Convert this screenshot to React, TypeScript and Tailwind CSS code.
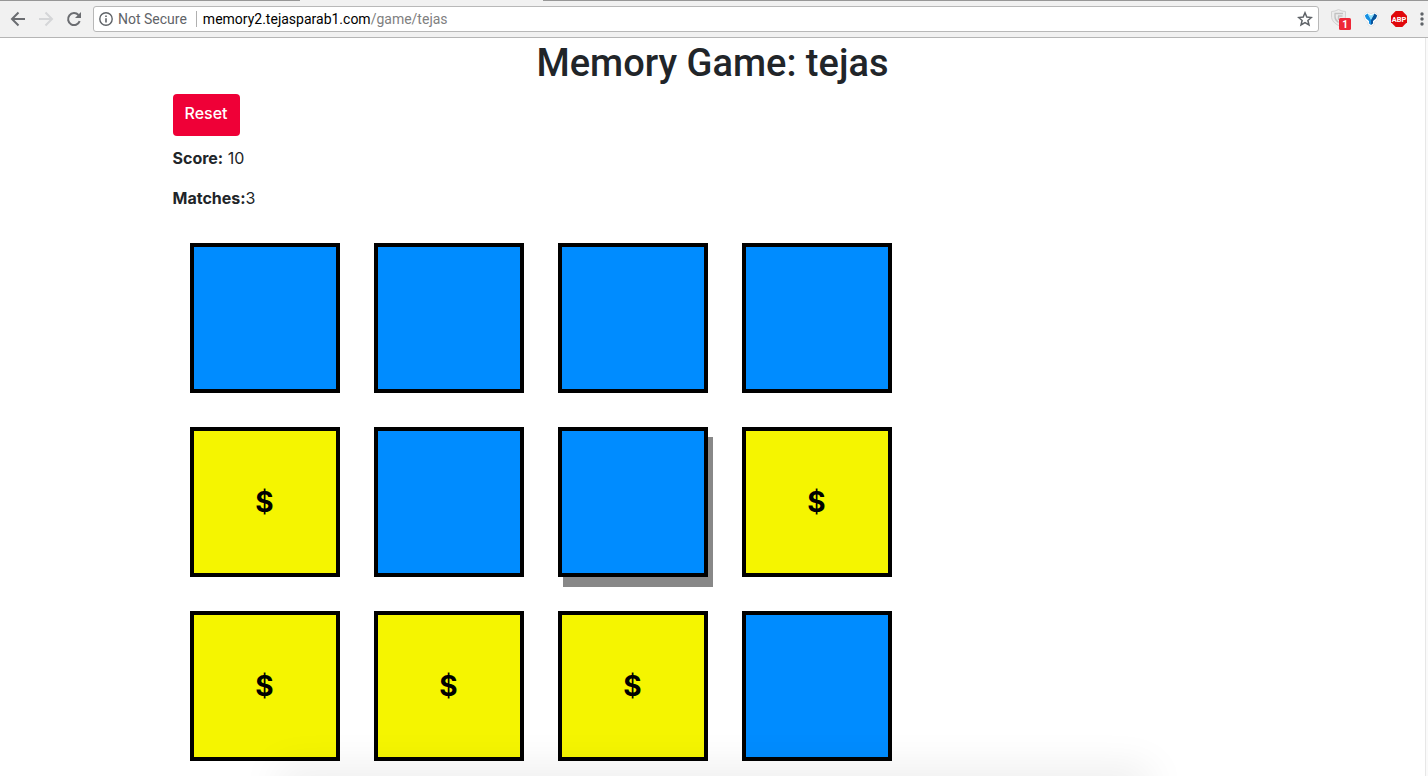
import { useState } from "react";

const initialCards = [
  false, false, false, false,
  true, false, false, true,
  true, true, true, false,
];

function BackIcon() {
  return (
    <svg viewBox="0 0 16 16" className="h-4 w-4" fill="none" stroke="currentColor" strokeWidth="2">
      <path d="M15 8H2.500M8.500 1.500 2 8l6.500 6.500" />
    </svg>
  );
}

function ForwardIcon() {
  return (
    <svg viewBox="0 0 16 16" className="h-4 w-4" fill="none" stroke="currentColor" strokeWidth="2">
      <path d="M1 8h12.500M7.500 1.500 14 8l-6.500 6.500" />
    </svg>
  );
}

function ReloadIcon() {
  return (
    <svg viewBox="0 0 16 16" className="h-4 w-4" fill="none" stroke="currentColor" strokeWidth="2">
      <path d="M13.700 10.200A6 6 0 1 1 12.500 4" />
      <path d="M15 1v6H9z" fill="currentColor" stroke="none" />
    </svg>
  );
}

function InfoIcon() {
  return (
    <svg viewBox="0 0 14 14" className="h-3.5 w-3.5 shrink-0" fill="none" stroke="#5f6368">
      <circle cx="7" cy="7" r="6.200" strokeWidth="1.400" />
      <path d="M7 6.200v4.300M7 3.500v1.500" strokeWidth="1.600" />
    </svg>
  );
}

function StarIcon() {
  return (
    <svg viewBox="0 0 16 16" className="h-4 w-4" fill="none" stroke="#5f6368" strokeWidth="1.500">
      <path d="m8 1.800 1.800 4.300 4.600.4-3.500 3 1.100 4.500L8 11.600 4 14l1.100-4.500-3.500-3 4.600-.4z" />
    </svg>
  );
}

function ShieldIcon() {
  return (
    <svg viewBox="0 0 20 22" className="h-[22px] w-5">
      <path d="M.5 3.500Q4 3.500 7.500 1.500 11 3.500 14.500 3.500V8c0 5-3.500 7.500-7 9.500C4 15.500.5 13 .5 8z" fill="#ececec" stroke="#d2d2d2" />
      <path d="M3.500 5.500h8.500M4 5.500V9c0 2 1.500 4 3.500 5.500M7 8h4.500M7.500 8v4" fill="none" stroke="#c2c2c2" strokeWidth="1.400" />
      <rect x="8" y="10" width="12" height="12" rx="1.500" fill="#ee2737" />
      <text x="14" y="19.500" textAnchor="middle" fontSize="10" fontWeight="700" fill="#fff" fontFamily="Roboto, sans-serif">1</text>
    </svg>
  );
}

function GemIcon() {
  return (
    <svg viewBox="0 0 16 16" className="h-4 w-4">
      <path d="M.7 4.500 4 1l4 1.700L12 1l3.300 3.500-1 4-3.300 3V14l-3 1.500L5 14v-2.500l-3.300-3z" fill="#fff" stroke="#dedede" strokeWidth=".8" />
      <path d="M1.800 4.500 4.500 2.500 8 8v6l-2-1.500V10L3 7.500z" fill="#1690e4" />
      <path d="M14.200 4.500 11.500 2.500 8 8v6l2-1.500V10l3-2.500z" fill="#06539c" />
      <path d="m4.500 2.500 3.500 2 3.500-2L8 9z" fill="#8fe0fb" />
    </svg>
  );
}

function AdblockIcon() {
  return (
    <svg viewBox="0 0 16 16" className="h-4 w-4">
      <path d="M4.700 0h6.600L16 4.700v6.600L11.300 16H4.700L0 11.300V4.700z" fill="#e0080c" />
      <text x="8" y="10.700" textAnchor="middle" fontSize="7.500" fontWeight="700" fill="#fff" fontFamily="Roboto, sans-serif">ABP</text>
    </svg>
  );
}

function MenuIcon() {
  return (
    <svg viewBox="0 0 4 14" className="h-3.5 w-1" fill="#5f6368">
      <circle cx="2" cy="2" r="1.700" />
      <circle cx="2" cy="7" r="1.700" />
      <circle cx="2" cy="12" r="1.700" />
    </svg>
  );
}

function Toolbar() {
  return (
    <header className="shrink-0 border-b border-[#b5b5b5] bg-[#f1f1f1] font-[Roboto,sans-serif]">
      <div className="flex h-px bg-[#979797]">
        <div className="ml-[21%] w-[17%] bg-[#f1f1f1]" />
      </div>
      <div className="flex h-9 items-center pr-1 pl-2.5">
        <nav className="mr-[11px] flex gap-3 text-[#6b6d71]">
          <button type="button" aria-label="Back"><BackIcon /></button>
          <button type="button" aria-label="Forward" className="text-[#d5d6d8]"><ForwardIcon /></button>
          <button type="button" aria-label="Reload"><ReloadIcon /></button>
        </nav>
        <div className="flex h-[26px] min-w-0 flex-1 items-center rounded-[3px] border border-[#b8b8b8] bg-white px-[5px] text-sm">
          <InfoIcon />
          <span className="ml-[5px] shrink-0 text-[#5f6368]">Not Secure</span>
          <span className="mr-1.5 ml-[9px] h-4 w-px shrink-0 bg-[#b0b0b0]" />
          <a href="#game" className="min-w-0 flex-1 truncate text-[#808080]">
            <span className="text-black">memory2.tejasparab1.com</span>/game/tejas
          </a>
          <button type="button" aria-label="Bookmark this page"><StarIcon /></button>
        </div>
        <div className="ml-3 flex items-center gap-3">
          <button type="button" aria-label="Privacy shield"><ShieldIcon /></button>
          <button type="button" aria-label="Gem extension"><GemIcon /></button>
          <button type="button" aria-label="Adblock Plus"><AdblockIcon /></button>
          <button type="button" aria-label="Menu" className="pl-px"><MenuIcon /></button>
        </div>
      </div>
    </header>
  );
}

export default function App() {
  const [cards, setCards] = useState(initialCards);
  const [score, setScore] = useState(10);
  const [matches, setMatches] = useState(3);

  const reset = () => {
    setCards(initialCards.map(() => false));
    setScore(0);
    setMatches(0);
  };

  return (
    <div className="relative flex h-screen flex-col overflow-hidden bg-white">
      <Toolbar />
      <div className="flex min-h-0 flex-1">
        <main className="min-w-0 flex-1 overflow-hidden font-[Inter,sans-serif] text-base text-[#212529]">
          <div className="mx-auto max-w-[1110px] px-[15px]">
            <h1 className="mb-1.5 text-center font-[Roboto,sans-serif] text-[38px] leading-[50px] font-medium">Memory Game: tejas</h1>
            <button
              type="button"
              onClick={reset}
              className="block rounded bg-[#ef0037] px-3 pt-[7px] pb-[11px] leading-6 font-medium text-white"
            >
              Reset
            </button>
            <p className="mt-2.5 mb-4 leading-6"><b className="font-bold">Score:</b> {score}</p>
            <p className="mb-4 leading-6"><b className="font-bold">Matches:</b>{matches}</p>
            <div className="grid w-fit grid-cols-4 gap-[34px] p-[17px]">
              {cards.map((matched, i) => (
                <button
                  key={i}
                  type="button"
                  aria-label={matched ? undefined : `Card ${i + 1}`}
                  className={
                    "size-[150px] border-4 border-black text-[28px] font-bold text-black " +
                    (matched ? "bg-[#f5f500]" : "bg-[#008cff]") +
                    (i === 6 ? " shadow-[5px_10px_#888888]" : "")
                  }
                >
                  {matched ? "$" : null}
                </button>
              ))}
            </div>
          </div>
        </main>
        <div className="w-[3px] shrink-0 border-l border-[#e7e7e7] bg-[#fafafa]" />
      </div>
      <div className="pointer-events-none absolute inset-x-[20%] top-full h-5 shadow-[0_0_40px_8px_rgba(0,0,0,0.08)]" />
    </div>
  );
}
